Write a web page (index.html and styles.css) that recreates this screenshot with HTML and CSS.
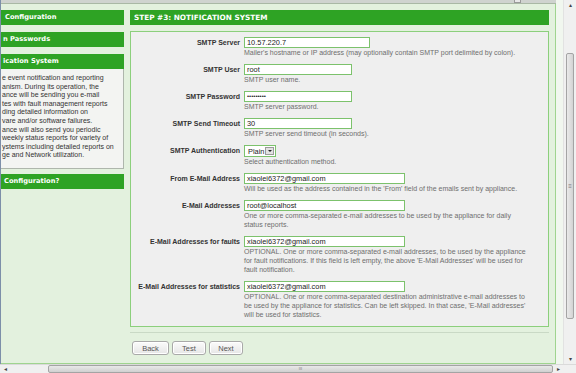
FILE: index.html
```html
<!DOCTYPE html>
<html lang="en">
<head>
  <meta charset="UTF-8" />
  <title>Step #3: Notification System</title>
  <link rel="stylesheet" href="styles.css">
</head>
<body>
  <div class="window">
    <div class="viewport">
      <div class="page">
        <div class="topbar"><span class="topbar-box"></span></div>
        <div class="frame">
          <div class="sidebar">
            <div class="side-head">Configuration</div>
            <div class="side-head">n Passwords</div>
            <div class="side-head side-open">ication System</div>
            <div class="side-body">
              <div>e event notification and reporting</div>
              <div>anism. During its operation, the</div>
              <div>ance will be sending you e-mail</div>
              <div>tes with fault management reports</div>
              <div>ding detailed information on</div>
              <div>vare and/or software failures.</div>
              <div>ance will also send you periodic</div>
              <div>weekly status reports for variety of</div>
              <div>ystems including detailed reports on</div>
              <div>ge and Network utilization.</div>
            </div>
            <div class="side-head">Configuration?</div>
          </div>

          <div class="main">
            <div class="main-head">STEP #3: NOTIFICATION SYSTEM</div>
            <div class="panel">
              <div class="row">
                <label>SMTP Server</label>
                <div class="field">
                  <div class="input w-md">10.57.220.7</div>
                  <div class="hint">Mailer's hostname or IP address (may optionally contain SMTP port delimited by colon).</div>
                </div>
              </div>
              <div class="row">
                <label>SMTP User</label>
                <div class="field">
                  <div class="input w-sm">root</div>
                  <div class="hint">SMTP user name.</div>
                </div>
              </div>
              <div class="row">
                <label>SMTP Password</label>
                <div class="field">
                  <div class="input w-sm dots">&bull;&bull;&bull;&bull;&bull;&bull;&bull;&bull;&bull;</div>
                  <div class="hint">SMTP server password.</div>
                </div>
              </div>
              <div class="row">
                <label>SMTP Send Timeout</label>
                <div class="field">
                  <div class="input w-sm">30</div>
                  <div class="hint">SMTP server send timeout (in seconds).</div>
                </div>
              </div>
              <div class="row row-select">
                <label>SMTP Authentication</label>
                <div class="field">
                  <div class="select"><span>Plain</span><span class="select-btn"></span></div>
                  <div class="hint">Select authentication method.</div>
                </div>
              </div>
              <div class="row">
                <label>From E-Mail Address</label>
                <div class="field">
                  <div class="input w-lg">xiaolei6372@gmail.com</div>
                  <div class="hint">Will be used as the address contained in the 'From' field of the emails sent by appliance.</div>
                </div>
              </div>
              <div class="row">
                <label>E-Mail Addresses</label>
                <div class="field">
                  <div class="input w-lg">root@localhost</div>
                  <div class="hint">One or more comma-separated e-mail addresses to be used by the appliance for daily<br>status reports.</div>
                </div>
              </div>
              <div class="row">
                <label>E-Mail Addresses for faults</label>
                <div class="field">
                  <div class="input w-lg">xiaolei6372@gmail.com</div>
                  <div class="hint">OPTIONAL. One or more comma-separated e-mail addresses, to be used by the appliance<br>for fault notifications. If this field is left empty, the above 'E-Mail Addresses' will be used for<br>fault notification.</div>
                </div>
              </div>
              <div class="row">
                <label>E-Mail Addresses for statistics</label>
                <div class="field">
                  <div class="input w-lg">xiaolei6372@gmail.com</div>
                  <div class="hint">OPTIONAL. One or more comma-separated destination administrative e-mail addresses to<br>be used by the appliance for statistics. Can be left skipped. In that case, 'E-Mail addresses'<br>will be used for statistics.</div>
                </div>
              </div>
            </div>
            <div class="actions">
              <button class="btn-back">Back</button>
              <button>Test</button>
              <button>Next</button>
            </div>
          </div>
        </div>
      </div>

      <div class="vscroll">
        <div class="arrow">&#9652;</div>
        <div class="track"><div class="thumb">&#8801;</div></div>
        <div class="arrow">&#9662;</div>
      </div>
    </div>

    <div class="hscroll">
      <div class="arrow">&#9666;</div>
      <div class="track"><div class="thumb">III</div></div>
      <div class="arrow">&#9656;</div>
      <div class="corner"></div>
    </div>
  </div>
</body>
</html>
```

FILE: styles.css
```css
html, body {
  margin: 0;
  height: 100%;
  overflow: hidden;
}
body {
  font-family: "Liberation Sans", Arial, sans-serif;
  font-size: 7px;
  color: #333;
  background: #fff;
}
.window {
  display: flex;
  flex-direction: column;
  height: 373px;
  width: 576px;
}
.viewport {
  display: flex;
  flex: 1;
  min-height: 0;
}
.page {
  flex: 1;
  display: flex;
  flex-direction: column;
  background: #f1f7ef;
  border-left: 1px solid #7d8fa9;
  padding-right: 7px;
}
.topbar {
  height: 3px;
  background: #cfd3cf;
  border-bottom: 1px solid #a9b8a5;
  position: relative;
}
.topbar-box {
  position: absolute;
  left: 513px;
  top: -3px;
  width: 5px;
  height: 4px;
  border: 1px solid #9a9a9a;
  background: #e8e8e8;
}
.frame {
  flex: 1;
  display: flex;
  gap: 6px;
  background: #e3f1de;
  border-right: 1px solid #9fd48f;
  border-bottom: 1px solid #9fd48f;
  padding: 6px 6px 0 0;
}

/* left navigation */
.sidebar {
  width: 123px;
}
.side-head {
  height: 15px;
  line-height: 15px;
  background: #2ea324;
  color: #fff;
  font-family: "DejaVu Sans", Verdana, sans-serif;
  font-weight: bold;
  font-size: 6.7px;
  padding-left: 2px;
  margin-bottom: 7px;
  white-space: nowrap;
  overflow: hidden;
}
.side-head:first-child {
  padding-left: 4px;
}
.side-head:last-child {
  padding-left: 3px;
}
.side-open {
  margin-bottom: 0;
}
.side-body {
  height: 94px;
  background: #f3f4f2;
  border-right: 1px solid #aeb6ac;
  border-bottom: 1px solid #aeb6ac;
  padding: 5px 0 0 1px;
  line-height: 8.6px;
  white-space: nowrap;
  overflow: hidden;
  margin-bottom: 5px;
}

/* step form */
.main {
  flex: 1;
  display: flex;
  flex-direction: column;
}
.main-head {
  height: 15px;
  line-height: 15px;
  background: #2ea324;
  color: #fff;
  font-family: "DejaVu Sans", Verdana, sans-serif;
  font-weight: bold;
  font-size: 7.3px;
  padding-left: 4px;
  margin-bottom: 6px;
}
.panel {
  background: #efefef;
  border: 1px solid #8ccf7c;
  padding-top: 5px;
}
.row {
  display: grid;
  grid-template-columns: 109px 1fr;
  column-gap: 4px;
  margin-bottom: 7px;
}
.row-select {
  margin-top: 2px;
}
.row label {
  text-align: right;
  font-weight: bold;
  line-height: 11px;
  color: #333;
  white-space: nowrap;
}
.field {
  padding-right: 6px;
}
.input {
  box-sizing: border-box;
  height: 11px;
  line-height: 9px;
  background: #fff;
  border: 1px solid #7cc26c;
  padding-left: 2px;
  color: #222;
  font-size: 7.4px;
}
.w-sm { width: 108px; }
.w-md { width: 126px; }
.w-lg { width: 161px; }
.dots {
  font-size: 6px;
  letter-spacing: 0;
}
.hint {
  color: #6e6e6e;
  line-height: 9px;
  white-space: nowrap;
}
.select {
  box-sizing: border-box;
  display: flex;
  align-items: center;
  justify-content: space-between;
  width: 32px;
  height: 12px;
  background: #fff;
  border: 1px solid #7cc26c;
  padding: 0 1px 0 3px;
  color: #222;
  font-size: 7.4px;
}
.select-btn {
  box-sizing: border-box;
  width: 9px;
  height: 8px;
  background: #e2e2e2;
  border: 1px solid #9b9b9b;
  position: relative;
}
.select-btn::after {
  content: "";
  position: absolute;
  left: 2px;
  top: 2px;
  border-left: 2px solid transparent;
  border-right: 2px solid transparent;
  border-top: 2px solid #222;
}
.actions {
  border-top: 1px solid #c9d9c5;
  margin-top: 5px;
  padding: 8px 0 0 2px;
  display: flex;
  gap: 3px;
}
.actions button {
  box-sizing: border-box;
  width: 34px;
  height: 14px;
  padding: 0;
  font-family: "Liberation Sans", Arial, sans-serif;
  font-size: 7.5px;
  color: #555;
  background: linear-gradient(#fbfbfb, #e6e6e6);
  border: 1px solid #a9a9a9;
  border-radius: 3px;
  box-shadow: inset 0 0 0 1px #fff;
}
.actions .btn-back {
  width: 37px;
}

/* browser scrollbars */
.vscroll {
  width: 13px;
  display: flex;
  flex-direction: column;
  background: #f0f0f0;
  border-left: 1px solid #e2e2e2;
  box-sizing: border-box;
}
.arrow {
  height: 10px;
  font-size: 6px;
  line-height: 10px;
  text-align: center;
  color: #444;
}
.vscroll .track {
  flex: 1;
  padding: 43px 2px 35px;
}
.vscroll .thumb {
  height: 100%;
  background: linear-gradient(90deg, #eaeaea, #d3d3d3);
  border: 1px solid #a4a4a4;
  border-radius: 2px;
  box-sizing: border-box;
  display: flex;
  align-items: center;
  justify-content: center;
  font-size: 6px;
  color: #777;
}
.hscroll {
  height: 8px;
  display: flex;
  background: #f0f0f0;
  border-top: 1px solid #dadada;
}
.hscroll .arrow {
  width: 10px;
  height: 8px;
  line-height: 8px;
}
.hscroll .track {
  flex: 1;
  padding: 0 0 0 38px;
}
.hscroll .thumb {
  height: 100%;
  background: linear-gradient(#e9e9e9, #d0d0d0);
  border: 1px solid #a4a4a4;
  border-radius: 2px;
  box-sizing: border-box;
  text-align: center;
  font-size: 4px;
  line-height: 6px;
  color: #777;
}
.hscroll .corner {
  width: 13px;
  background: #f0f0f0;
}
```
